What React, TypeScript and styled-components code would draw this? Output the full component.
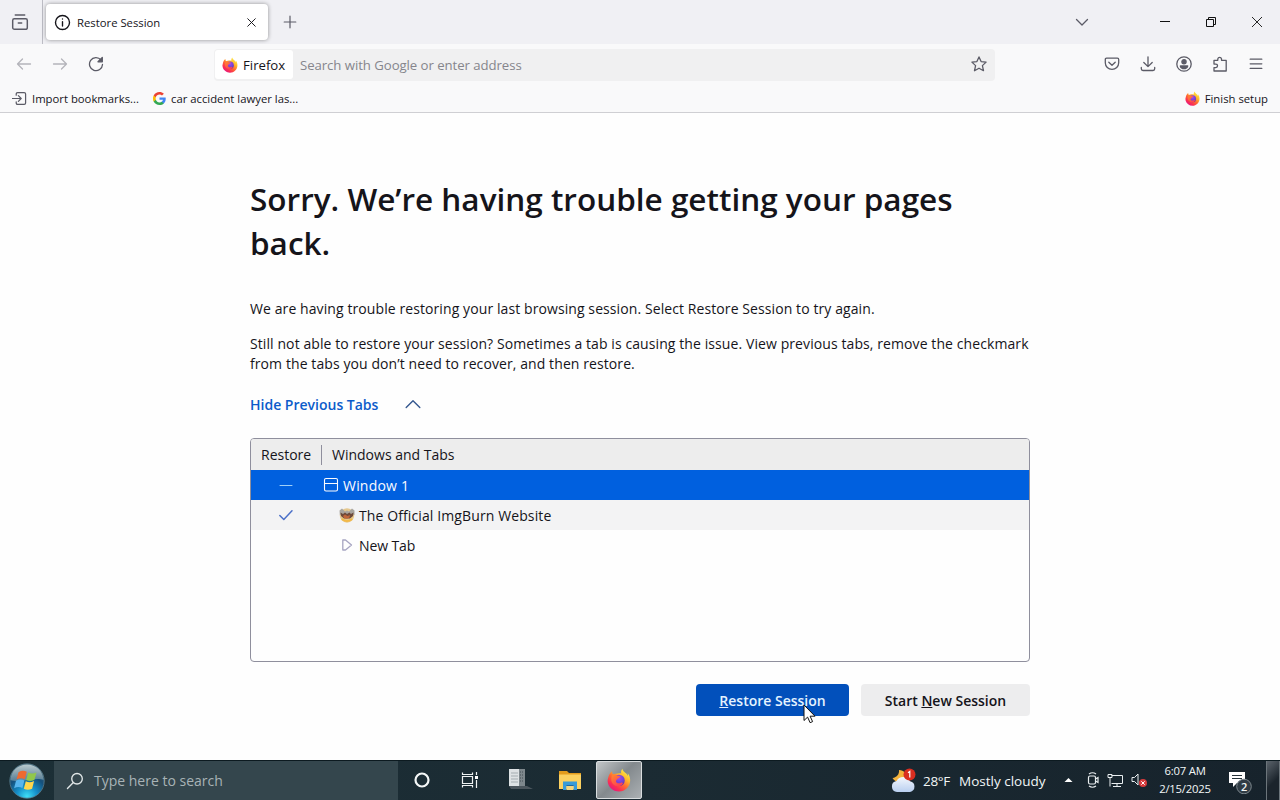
import type { ReactNode } from "react";
import styled, { createGlobalStyle } from "styled-components";

const GlobalStyle = createGlobalStyle`
  * {
    box-sizing: border-box;
  }
  body {
    margin: 0;
    overflow: hidden;
    font-family: "Segoe UI", "Open Sans", "Noto Sans", sans-serif;
    color: #15141a;
  }
  svg {
    display: block;
    flex: none;
  }
`;

/**
 * Icons
 */
interface IconProps {
  size?: number;
  color?: string;
  stroke?: number;
  children?: ReactNode;
}

const Icon = ({ size = 16, color = "#5b5b66", stroke = 1.3, children }: IconProps) => (
  <svg
    width={size}
    height={size}
    viewBox="0 0 16 16"
    fill="none"
    stroke={color}
    strokeWidth={stroke}
    strokeLinecap="round"
    strokeLinejoin="round"
  >
    {children}
  </svg>
);

const FirefoxLogo = ({ size, id }: { size: number; id: string }) => (
  <svg width={size} height={size} viewBox="0 0 32 32">
    <defs>
      <linearGradient id={`${id}-body`} x1="0.85" y1="0.08" x2="0.2" y2="0.95">
        <stop offset="0" stopColor="#fff04a" />
        <stop offset="0.3" stopColor="#ffb62b" />
        <stop offset="0.55" stopColor="#ff6a32" />
        <stop offset="0.8" stopColor="#fb2f52" />
        <stop offset="1" stopColor="#e31587" />
      </linearGradient>
      <radialGradient id={`${id}-globe`} cx="0.5" cy="0.3" r="0.75">
        <stop offset="0" stopColor="#a04bf2" />
        <stop offset="0.6" stopColor="#7142cf" />
        <stop offset="1" stopColor="#54309f" />
      </radialGradient>
      <linearGradient id={`${id}-fox`} x1="0" y1="0" x2="0.7" y2="1">
        <stop offset="0" stopColor="#ff8a2e" />
        <stop offset="1" stopColor="#ff3d55" />
      </linearGradient>
    </defs>
    <path
      d="M20.5 1c-1.600 2.200-2.200 4-1.500 6.200C13.500 6.500 9.500 8.500 8.200 8.400 7.200 7.500 6.700 5.800 6.800 4.200 4.200 6 2.400 9.300 1.700 12.800.7 15.500.6 18 1.400 20.700 3.200 27 9 31.400 15.900 31.400c8.300 0 15-6.600 15-15 0-4-1.500-7.400-3.400-9.300.4 1.200.6 2.500.5 3.500C26.500 6.700 21.300 5.600 20.500 1z"
      fill={`url(#${id}-body)`}
    />
    <circle cx="16" cy="16.500" r="7.600" fill={`url(#${id}-globe)`} />
    <path
      d="M7 9.500c2.500-1.300 5-.7 6.600.9 1.700-.1 3.300.2 4.600 1.200-1.400.9-2.900 1.700-3.900 2.600-.4 1.300-2.400 1.600-2.400 3.200 0 2.500 3.600 4 6.600 2.400 1.500-.8 2.500-.2 2.800.5-1.200 2.800-3.800 4.300-6.700 4-5-.4-8.700-4.300-8.800-8.800 0-2.300.3-4 1.200-6z"
      fill={`url(#${id}-fox)`}
    />
  </svg>
);

const GoogleLogo = () => (
  <svg width="13" height="13" viewBox="0 0 48 48">
    <path fill="#4285f4" d="M47 24.500c0-1.600-.2-3.200-.4-4.500H24v9h13c-.6 3-2.300 5.500-4.800 7.200v6h7.700C44.400 38 47 31.800 47 24.500z" />
    <path fill="#34a853" d="M24 48c6.500 0 11.900-2.100 15.900-5.800l-7.700-6c-2.200 1.400-4.900 2.300-8.200 2.300-6.300 0-11.600-4.200-13.500-9.900h-8v6.200C6.500 42.600 14.600 48 24 48z" />
    <path fill="#fbbc05" d="M10.500 28.600a14.400 14.400 0 0 1 0-9.200v-6.200h-8a24 24 0 0 0 0 21.600z" />
    <path fill="#ea4335" d="M24 9.500c3.600 0 6.700 1.200 9.200 3.600l6.900-6.900C35.900 2.400 30.500 0 24 0 14.600 0 6.500 5.400 2.500 13.200l8 6.200C12.400 13.700 17.700 9.500 24 9.500z" />
  </svg>
);

const StartOrb = () => (
  <svg width="36" height="36" viewBox="0 0 36 36">
    <defs>
      <radialGradient id="orb" cx="0.5" cy="0.95" r="0.85">
        <stop offset="0" stopColor="#3fe0f6" />
        <stop offset="0.35" stopColor="#1590ca" />
        <stop offset="0.7" stopColor="#15507c" />
        <stop offset="1" stopColor="#3c6073" />
      </radialGradient>
      <linearGradient id="gloss" x1="0" y1="0" x2="0" y2="1">
        <stop offset="0" stopColor="#d0dde0" stopOpacity="0.85" />
        <stop offset="1" stopColor="#94adb5" stopOpacity="0.5" />
      </linearGradient>
    </defs>
    <circle cx="18" cy="18" r="17.200" fill="url(#orb)" stroke="#587c8c" strokeWidth="0.8" />
    <path d="M1.500 17C2 8 9 1.600 18 1.600S34 8 34.500 17C27 13.500 10 20.500 1.500 17z" fill="url(#gloss)" />
    <path d="M9.500 9.200c3-1.800 5.600-1.700 8.300-.4l-2 7.400c-2.700-1.500-5.300-1.400-8.300.2z" fill="#ee6a30" />
    <path d="M19.200 9.600c2.500 1.300 5.300 1.300 8.300-.2l-2 7.300c-2.900 1.500-5.600 1.600-8.300.2z" fill="#91c74b" />
    <path d="M7 17.800c3-1.600 5.700-1.700 8.400-.2l-2 7.300c-2.700-1.400-5.400-1.300-8.300.3z" fill="#58b5ed" />
    <path d="M16.800 18.300c2.500 1.400 5.300 1.300 8.300-.2l-2 7.600c-2.900 1.500-5.600 1.500-8.300.1z" fill="#ffd64c" />
  </svg>
);

const WeatherIcon = () => (
  <svg width="27" height="26" viewBox="0 0 27 26">
    <defs>
      <linearGradient id="cloud" x1="0" y1="0" x2="0" y2="1">
        <stop offset="0" stopColor="#f3f7fd" />
        <stop offset="1" stopColor="#b9cff0" />
      </linearGradient>
    </defs>
    <path d="M9 2c.5 4-2 7.500-6.500 8 2.500 4.500 9 5.500 13 1.500C17.500 6 14 2 9 2z" fill="#f3b23c" />
    <path d="M7 24a5.500 5.500 0 0 1-.5-10.900A7.500 7.500 0 0 1 20 13.200 5.500 5.500 0 0 1 20 24z" fill="url(#cloud)" />
    <circle cx="19.500" cy="6.500" r="6" fill="#d92e20" />
    <path d="M18 4.800l1.800-1.300v6" stroke="#fff" strokeWidth="1.200" fill="none" />
  </svg>
);

const ServerIcon = () => (
  <svg width="26" height="26" viewBox="0 0 26 26">
    <path d="M2 2h10v17H2z" fill="#dde2e4" />
    <path d="M12 2h6v17h-6z" fill="#7d878c" />
    <path d="M4 6h7M4 9h7M4 12h7M4 15h7" stroke="#a4adb1" />
    <path d="M13 5h4M13 8h4M13 11h4M13 14h4" stroke="#454f55" strokeDasharray="1 1" />
    <path d="M2 19h18l6 3H4z" fill="#4b565d" />
  </svg>
);

const FolderIcon = () => (
  <svg width="24" height="22" viewBox="0 0 24 22">
    <path d="M1 2h8l2 2h12v5H1z" fill="#e39c1c" />
    <path d="M1 5.500h22V20H1z" fill="#fbd160" />
    <path d="M5 21v-8.500h14V21h-3.500v-4h-7v4z" fill="#379bd8" />
    <path d="M8.500 17h7v4h-7z" fill="#f3d681" />
    <path d="M8.500 16.500h7" stroke="#20669c" />
  </svg>
);

const SystemTray = () => (
  <TrayGroup>
    <svg width="9" height="6" viewBox="0 0 9 6">
      <path d="M.5 5l4-4 4 4z" fill="#fff" />
    </svg>
    <svg width="14" height="18" viewBox="0 0 14 18" fill="none" stroke="#e9eef0" strokeWidth="1.200">
      <rect x="2.500" y="5" width="7" height="8" rx="1.500" />
      <path d="M9.500 8l2.500-1.500v5L9.500 10M3 3q3.500-2.500 7 0M3 15q3.500 2.500 7 0" />
    </svg>
    <svg width="17" height="16" viewBox="0 0 17 16" fill="none" stroke="#e9eef0">
      <path d="M4.500 3.500h11v8h-11M10 11.500v3M6 14.500h8M1 2.500h4v3H1zM3 5.500v9" />
    </svg>
    <svg width="17" height="18" viewBox="0 0 17 18">
      <path d="M1 6.500h2.500L7 3v11l-3.500-3.500H1z" fill="none" stroke="#e9eef0" />
      <circle cx="12" cy="12" r="4" fill="#d73b3d" />
      <path d="M10.300 10.300l3.400 3.400m0-3.400l-3.400 3.400" stroke="#fff" />
    </svg>
  </TrayGroup>
);

const MouseCursor = () => (
  <Pointer width="13" height="20" viewBox="0 0 13 20">
    <path d="M1 1v15.500l3.600-3.400 2.500 5.600 2.500-1.100-2.500-5.400H12z" fill="#fff" stroke="#111" />
  </Pointer>
);

/**
 * Browser chrome
 */
const TabBar = () => (
  <TabStrip>
    <ViewButton>
      <Icon size={18}>
        <path d="M3.800 1.800h8.400M1.500 6.600Q1.500 5.200 2.900 5.200h10.200q1.400 0 1.400 1.400v6.200q0 1.700-1.700 1.700H3.200q-1.700 0-1.700-1.700zM6.500 8.800h3" />
      </Icon>
    </ViewButton>
    <Tab>
      <Icon size={17} color="#15141a">
        <circle cx="8" cy="8" r="6.600" />
        <path d="M8 7.300v4M8 4.600v.2" />
      </Icon>
      <TabTitle>Restore Session</TabTitle>
      <Icon size={11} color="#15141a" stroke={1.4}>
        <path d="M2.500 2.500l11 11M13.500 2.500l-11 11" />
      </Icon>
    </Tab>
    <NewTabButton>
      <Icon stroke={1.2}>
        <path d="M8 2.200v11.600M2.200 8h11.600" />
      </Icon>
    </NewTabButton>
    <WindowControls>
      <ControlCell $width={120}>
        <Icon>
          <path d="M2.500 5.500L8 11l5.500-5.500" />
        </Icon>
      </ControlCell>
      <ControlCell $width={46}>
        <svg width="12" height="12" viewBox="0 0 12 12">
          <path d="M1 5.500h10" stroke="#111" />
        </svg>
      </ControlCell>
      <ControlCell $width={46}>
        <svg width="12" height="12" viewBox="0 0 12 12" fill="none" stroke="#111">
          <path d="M1.500 3.500h7v7h-7zM3.500 3.500v-2h7v7h-2" />
        </svg>
      </ControlCell>
      <ControlCell $width={46}>
        <svg width="12" height="12" viewBox="0 0 12 12" stroke="#111" strokeWidth="0.900">
          <path d="M1 1l10 10M11 1L1 11" />
        </svg>
      </ControlCell>
    </WindowControls>
  </TabStrip>
);

const NavigationBar = () => (
  <NavBar>
    <NavButtons>
      <Icon color="#b4b4ba">
        <path d="M1.500 8h13M6.500 3l-5 5 5 5" />
      </Icon>
      <Icon color="#b4b4ba">
        <path d="M14.500 8h-13M9.500 3l5 5-5 5" />
      </Icon>
      <Icon>
        <path d="M13 4A6.500 6.500 0 1 0 14.500 8.500" />
        <path d="M14.300 1.500v4.300H10z" fill="#5b5b66" />
      </Icon>
    </NavButtons>
    <UrlBar>
      <Identity>
        <FirefoxLogo size={16} id="identity" />
        Firefox
      </Identity>
      <Placeholder>Search with Google or enter address</Placeholder>
      <StarSlot>
        <Icon>
          <path d="M8 .9l2.100 4.700 5 .5-3.700 3.500 1.100 5.100L8 12.200l-4.500 2.500 1.100-5.100L.9 6.100l5-.5z" />
        </Icon>
      </StarSlot>
    </UrlBar>
    <ToolbarButtons>
      <Icon>
        <path d="M2.600 2.200h10.800q1.300 0 1.300 1.300v3.200a6.700 6.700 0 0 1-13.400 0V3.500q0-1.300 1.300-1.300zM4.800 6.200L8 9.300l3.200-3.100" />
      </Icon>
      <Icon>
        <path d="M8 .8v9.700M3.800 6.500L8 10.600l4.200-4.100M1.300 11.500v1.300q0 1.700 1.700 1.700h10q1.700 0 1.700-1.700v-1.300" />
      </Icon>
      <Icon>
        <circle cx="8" cy="8" r="7.200" />
        <circle cx="8" cy="5.800" r="2.100" fill="#5b5b66" />
        <path d="M4.300 10h7.400q-.8 2.700-3.700 2.700T4.300 10z" fill="#5b5b66" />
      </Icon>
      <Icon>
        <path d="M2 8.100V4.300h3.800V2.800a1.900 1.900 0 0 1 3.700 0v1.500h4.700V15H2v-3.400h1.800a1.700 1.700 0 0 0 0-3.500z" />
      </Icon>
      <Icon>
        <path d="M2.200 3.200h11.600M2.200 7.800h11.600M2.200 12.400h11.600" />
      </Icon>
    </ToolbarButtons>
  </NavBar>
);

const BookmarksToolbar = () => (
  <BookmarksBar>
    <Bookmark $gap={5}>
      <Icon size={15}>
        <path d="M.5 8h9M6.800 5l3 3-3 3M4.500 4.500V3.200q0-1.500 1.500-1.500h7q1.500 0 1.500 1.500v9.600q0 1.500-1.500 1.500H6q-1.500 0-1.500-1.500v-1.300" />
      </Icon>
      <ImportLabel>Import bookmarks...</ImportLabel>
    </Bookmark>
    <Bookmark $gap={5}>
      <GoogleLogo />
      <span>car accident lawyer las...</span>
    </Bookmark>
    <SetupBookmark $gap={5}>
      <FirefoxLogo size={15} id="setup" />
      <span>Finish setup</span>
    </SetupBookmark>
  </BookmarksBar>
);

/**
 * Tree listing the windows and tabs that can be restored
 */
const SessionTree = () => (
  <Tree>
    <TreeHeader>
      <HeaderCell>Restore</HeaderCell>
      <HeaderTitle>Windows and Tabs</HeaderTitle>
    </TreeHeader>
    <TreeRow $background="#0060df" $color="#fbfbfe">
      <CheckCell>
        <Icon color="#9fd0f8" stroke={1}>
          <path d="M2 8.500h12" />
        </Icon>
      </CheckCell>
      <TreeCell $indent={2}>
        <Icon color="#fbfbfe" stroke={1.1}>
          <rect x="1.500" y="1.500" width="13" height="12.500" rx="1.500" />
          <path d="M1.500 6.500h13" />
        </Icon>
        <RowText $track={0.2}>Window 1</RowText>
      </TreeCell>
    </TreeRow>
    <TreeRow $background="#f3f3f4">
      <CheckCell>
        <Icon color="#4a6fc8" stroke={1.5}>
          <path d="M1.800 8.500l4 4L14 3.800" />
        </Icon>
      </CheckCell>
      <TreeCell $indent={18}>
        <svg width="16" height="16" viewBox="0 0 16 16">
          <circle cx="8" cy="8.500" r="7.200" fill="#e6c88e" />
          <path d="M.5 3.500L3 1.500l3 3 2-1 2 1 3-3 2.500 2V8L12 7H4L.8 8z" fill="#a9a59f" />
          <path d="M1.500 5.500L4 7l2-1.500L8 7l2.500-1.500L12 7l2.500-1.500L14 9l-3 2.500H5L2 9z" fill="#6e4a3a" />
          <path d="M4 9l2-1.500L8.500 9 11 8l-.5 2.500-2.500 1.200L5 11z" fill="#c0653a" />
          <path d="M2.800 12Q8 16 13.200 12" stroke="#f2b949" strokeWidth="1.800" fill="none" />
        </svg>
        <RowText $track={0.11}>The Official ImgBurn Website</RowText>
      </TreeCell>
    </TreeRow>
    <TreeRow>
      <CheckCell />
      <TreeCell $indent={18}>
        <Icon color="#a7a5c2" stroke={1.3}>
          <path d="M3.800 3v10h2.700L12.500 8 6.500 3z" />
        </Icon>
        <RowText $track={-0.1}>New Tab</RowText>
      </TreeCell>
    </TreeRow>
  </Tree>
);

const Taskbar = () => (
  <TaskbarContainer>
    <StartButton>
      <StartOrb />
    </StartButton>
    <SearchBox>
      <Icon size={18} color="#e1e7e8" stroke={1.2}>
        <circle cx="9.800" cy="6" r="4.700" />
        <path d="M6.300 9.500L1.300 14.700" />
      </Icon>
      <span>Type here to search</span>
    </SearchBox>
    <TaskButton $width={48}>
      <svg width="16" height="16" viewBox="0 0 16 16">
        <circle cx="8" cy="8" r="6.500" fill="none" stroke="#f4f7f7" strokeWidth="2.200" />
      </svg>
    </TaskButton>
    <TaskButton $width={48}>
      <svg width="18" height="18" viewBox="0 0 18 18" fill="none" stroke="#eef2f3" strokeWidth="1.200">
        <path d="M1.500 5.500h10v7h-10zM1.500 1.500v2h10v-2M1.500 16.500v-2h10v2M15.500 1v3M15.500 9v8" />
        <path d="M14 5h3v3h-3z" fill="#fff" stroke="none" />
      </svg>
    </TaskButton>
    <TaskButton $width={52}>
      <ServerIcon />
    </TaskButton>
    <TaskButton $width={48}>
      <FolderIcon />
    </TaskButton>
    <TaskButton $width={46} $active>
      <FirefoxLogo size={24} id="task" />
    </TaskButton>
    <Weather>
      <WeatherIcon />
      <Temperature>28°F</Temperature>
      <Condition>Mostly cloudy</Condition>
    </Weather>
    <SystemTray />
    <Clock>
      <span>6:07 AM</span>
      <span>2/15/2025</span>
    </Clock>
    <ActionCenter>
      <svg width="26" height="26" viewBox="0 0 26 26">
        <path d="M1 4h16v11H9l-4 4v-4H1z" fill="#fff" />
        <path d="M4 7.500h10M4 10.500h10" stroke="#25323a" />
        <circle cx="16" cy="18.500" r="7.300" fill="#303c45" stroke="#7d878d" />
      </svg>
      <Badge>2</Badge>
    </ActionCenter>
    <ShowDesktop />
  </TaskbarContainer>
);

const App = () => {
  return (
    <>
      <GlobalStyle />
      <Screen>
        <TabBar />
        <NavigationBar />
        <BookmarksToolbar />
        <Page>
          <Content>
            <Title>
              <TitleLine>Sorry. We’re having trouble getting your pages</TitleLine>
              <TitleLine>back.</TitleLine>
            </Title>
            <Intro>
              <TextLine>
                We are having trouble restoring your last browsing session. Select Restore Session to try again.
              </TextLine>
            </Intro>
            <Details>
              <TextLine>
                Still not able to restore your session? Sometimes a tab is causing the issue. View previous tabs, remove the checkmark
              </TextLine>
              <TextLine>from the tabs you don’t need to recover, and then restore.</TextLine>
            </Details>
            <TabsToggle>
              <ToggleLabel>Hide Previous Tabs</ToggleLabel>
              <Icon color="#34578f" stroke={1.4}>
                <path d="M1.200 11.500L8 4.800l6.800 6.700" />
              </Icon>
            </TabsToggle>
            <SessionTree />
            <ButtonRow>
              <ActionButton $primary $width={153}>
                <u>R</u>estore Session
                <MouseCursor />
              </ActionButton>
              <ActionButton $width={169}>
                Start <u>N</u>ew Session
              </ActionButton>
            </ButtonRow>
          </Content>
        </Page>
        <Taskbar />
      </Screen>
    </>
  );
};

export default App;

const Screen = styled.div`
  display: flex;
  flex-direction: column;
  width: 1280px;
  height: 800px;
  overflow: hidden;
  background-color: #fefefe;
  white-space: nowrap;
`;

const TabStrip = styled.div`
  display: flex;
  flex: none;
  height: 44px;
  background-color: #f0f0f4;
`;

const ViewButton = styled.div`
  display: flex;
  align-items: center;
  justify-content: center;
  width: 43px;
  padding-right: 2px;
  border-right: 1px solid #bcbcc4;
`;

const Tab = styled.div`
  display: flex;
  align-items: center;
  width: 222px;
  height: 36px;
  margin: 4px 0 0 3px;
  padding: 0 11px 0 8px;
  border-radius: 4px;
  background-color: #fff;
  box-shadow: 0 0 4px rgba(0, 0, 0, 0.4);
`;

const TabTitle = styled.span`
  flex: 1;
  margin-left: 6px;
  font-size: 11.3px;
`;

const NewTabButton = styled.div`
  display: flex;
  align-items: center;
  margin-left: 14px;
`;

const WindowControls = styled.div`
  display: flex;
  margin-left: auto;
`;

const ControlCell = styled.div<{ $width: number }>`
  display: flex;
  align-items: center;
  justify-content: center;
  width: ${({ $width }) => $width}px;
`;

const NavBar = styled.div`
  display: flex;
  align-items: center;
  flex: none;
  height: 41px;
  padding: 0 16px;
  background-color: #f9f9fa;
`;

const NavButtons = styled.div`
  display: flex;
  gap: 20px;
  width: 198px;
  padding-bottom: 1px;
`;

const UrlBar = styled.div`
  display: flex;
  align-items: center;
  width: 781px;
  height: 32px;
  padding: 0 8px 0 1px;
  border-radius: 4px;
  background-color: #f0f0f1;
`;

const Identity = styled.div`
  display: flex;
  align-items: center;
  gap: 5px;
  width: 78px;
  height: 29px;
  padding-left: 7px;
  border-radius: 3px;
  background-color: #fff;
  font-size: 13.2px;
`;

const Placeholder = styled.span`
  flex: 1;
  margin-left: 7px;
  color: #85858c;
  font-size: 13.2px;
  letter-spacing: -0.06px;
`;

const StarSlot = styled.div`
  padding-bottom: 1px;
`;

const ToolbarButtons = styled.div`
  display: flex;
  gap: 20px;
  margin-left: auto;
  padding-bottom: 1px;
`;

const BookmarksBar = styled.div`
  display: flex;
  align-items: center;
  flex: none;
  height: 28px;
  padding: 0 12px;
  border-bottom: 1px solid #cfcfd3;
  background-color: #f9f9fa;
  font-size: 11.3px;
`;

const Bookmark = styled.div<{ $gap: number }>`
  display: flex;
  align-items: center;
  gap: ${({ $gap }) => $gap}px;
`;

const SetupBookmark = styled(Bookmark)`
  margin-left: auto;
`;

const ImportLabel = styled.span`
  width: 121px;
`;

const Page = styled.main`
  display: flex;
  justify-content: center;
  flex: 1;
  padding-top: 64px;
`;

const Content = styled.div`
  display: flex;
  flex-direction: column;
  width: 780px;
`;

const Title = styled.h1`
  margin: 0;
  font-size: 31.5px;
  font-weight: 600;
  line-height: 44px;
`;

const TitleLine = styled.span`
  display: block;
`;

const Intro = styled.p`
  margin: 34px 0 0;
`;

const Details = styled.p`
  margin: 15px 0 0;
`;

const TextLine = styled.span`
  display: block;
  font-size: 14px;
  line-height: 20px;
  letter-spacing: 0.09px;
`;

const TabsToggle = styled.div`
  display: flex;
  align-items: center;
  height: 20px;
  margin-top: 20px;
  color: #0b5bca;
`;

const ToggleLabel = styled.span`
  width: 155px;
  font-size: 14px;
  font-weight: 600;
`;

const Tree = styled.div`
  height: 224px;
  margin-top: 24px;
  border: 1px solid #8f8f9d;
  border-radius: 4px;
  overflow: hidden;
  font-size: 14px;
`;

const TreeHeader = styled.div`
  display: flex;
  align-items: center;
  height: 31px;
  background-color: #ededed;
`;

const HeaderCell = styled.div`
  width: 71px;
  height: 20px;
  padding-left: 10px;
  border-right: 1px solid #8f8f9d;
  line-height: 20px;
`;

const HeaderTitle = styled.span`
  margin-left: 10px;
`;

const TreeRow = styled.div<{ $background?: string; $color?: string }>`
  display: flex;
  align-items: center;
  height: 30px;
  background-color: ${({ $background }) => $background ?? "transparent"};
  color: ${({ $color }) => $color ?? "#15141a"};
`;

const CheckCell = styled.div`
  display: flex;
  justify-content: center;
  width: 70px;
`;

const TreeCell = styled.div<{ $indent: number }>`
  display: flex;
  align-items: center;
  gap: 4px;
  padding-left: ${({ $indent }) => $indent}px;
`;

const RowText = styled.span<{ $track: number }>`
  letter-spacing: ${({ $track }) => $track}px;
`;

const ButtonRow = styled.div`
  display: flex;
  justify-content: flex-end;
  gap: 12px;
  margin-top: 22px;
`;

const ActionButton = styled.button<{ $primary?: boolean; $width: number }>`
  position: relative;
  width: ${({ $width }) => $width}px;
  height: 32px;
  padding: 0;
  border: none;
  border-radius: 4px;
  background-color: ${({ $primary }) => ($primary ? "#0250bb" : "#ededee")};
  color: ${({ $primary }) => ($primary ? "#e4f3ff" : "#15141a")};
  font-family: inherit;
  font-size: 14px;
  font-weight: 600;
`;

/* floats over the primary button */
const Pointer = styled.svg`
  position: absolute;
  top: 20px;
  left: 107px;
`;

const TaskbarContainer = styled.div`
  display: flex;
  flex: none;
  height: 40px;
  border-top: 1px solid #0c1a20;
  background: linear-gradient(90deg, #1c2f36 0%, #1b2b33 50%, #17232c 100%);
  color: #f2f6f6;
`;

const StartButton = styled.div`
  display: flex;
  align-items: center;
  justify-content: center;
  width: 54px;
`;

const SearchBox = styled.div`
  display: flex;
  align-items: center;
  gap: 10px;
  width: 344px;
  padding-left: 12px;
  background-color: #34464d;
  color: #a8b3b6;
  font-size: 14px;
`;

const TaskButton = styled.div<{ $width: number; $active?: boolean }>`
  display: flex;
  align-items: center;
  justify-content: center;
  width: ${({ $width }) => $width}px;
  margin: ${({ $active }) => ($active ? "0 0 1px 2px" : "0 0 1px")};
  border: ${({ $active }) => ($active ? "1px solid #d9dddf" : "none")};
  border-radius: 2px;
  background: ${({ $active }) =>
    $active ? "linear-gradient(135deg, #c2c6c8 0%, #83898d 48%, #abb0b3 100%)" : "none"};
`;

const Weather = styled.div`
  display: flex;
  align-items: center;
  width: 174px;
  margin-left: auto;
  font-size: 13.5px;
`;

const Temperature = styled.span`
  margin-left: 6px;
  letter-spacing: -0.3px;
`;

const Condition = styled.span`
  margin-left: 9px;
`;

const TrayGroup = styled.div`
  display: flex;
  align-items: center;
  gap: 7px;
  width: 90px;
  padding-bottom: 1px;
  & > svg:first-child {
    margin-right: 6px;
  }
`;

const Clock = styled.div`
  display: flex;
  flex-direction: column;
  align-items: center;
  width: 62px;
  padding-top: 1px;
  font-size: 11.3px;
  line-height: 18px;
  letter-spacing: -0.2px;
`;

const ActionCenter = styled.div`
  position: relative;
  display: flex;
  align-items: center;
  width: 38px;
  margin-left: 12px;
`;

/* unread count over the notification icon */
const Badge = styled.span`
  position: absolute;
  top: 18px;
  left: 13px;
  font-size: 11px;
  font-weight: 600;
  line-height: 16px;
`;

const ShowDesktop = styled.div`
  width: 14px;
  border-left: 1px solid #6c757b;
  border-right: 1px solid #6c757b;
  background: linear-gradient(135deg, #5b636b 0%, #1b242c 55%);
`;
